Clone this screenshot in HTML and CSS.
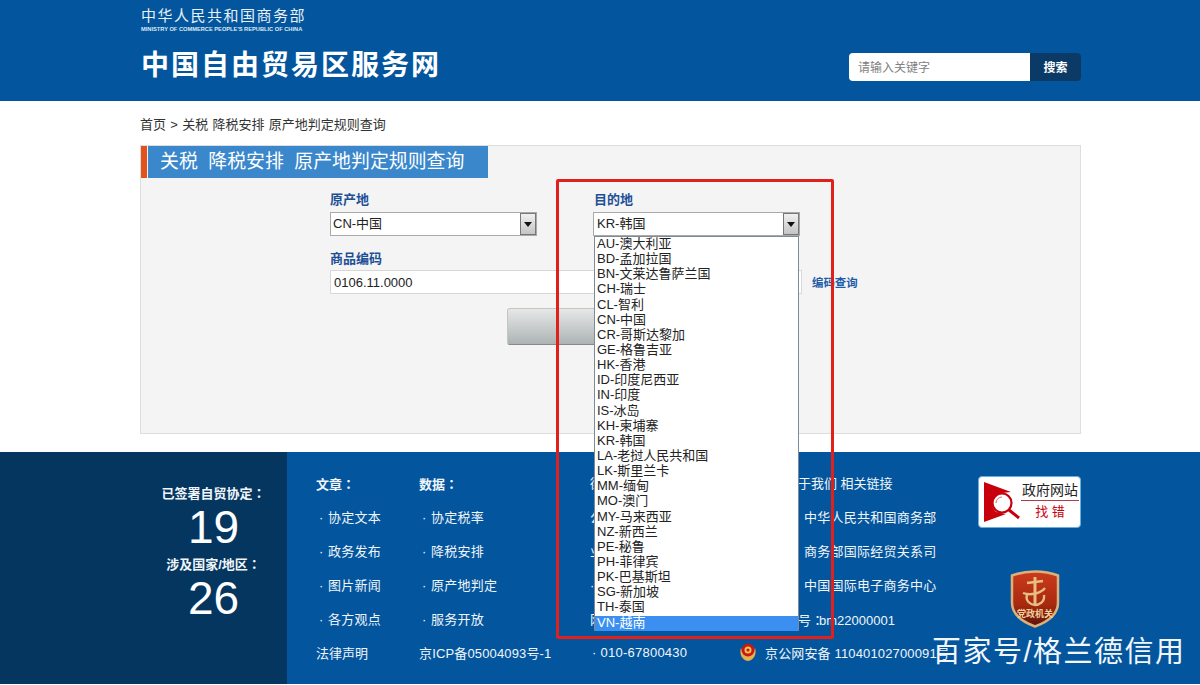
FILE: index.html
```html
<!DOCTYPE html>
<html lang="zh-CN">
<head>
<meta charset="utf-8">
<title>中国自由贸易区服务网</title>
<link rel="stylesheet" href="styles.css">
</head>
<body>
<header class="site-header">
  <div class="wrap header-inner">
    <div class="brand">
      <div class="ministry">中华人民共和国商务部</div>
      <div class="ministry-en">MINISTRY OF COMMERCE PEOPLE'S REPUBLIC OF CHINA</div>
      <div class="site-name">中国自由贸易区服务网</div>
    </div>
    <div class="search">
      <div class="search-input">请输入关键字</div>
      <div class="search-btn">搜索</div>
    </div>
  </div>
</header>

<main class="wrap">
  <div class="crumb">首页 &gt; 关税 降税安排 原产地判定规则查询</div>
  <section class="panel">
    <h1 class="panel-title"><span class="panel-title-text">关税  降税安排  原产地判定规则查询</span></h1>
    <div class="form">
      <div class="form-row">
        <div class="field">
          <div class="label">原产地</div>
          <div class="select"><span>CN-中国</span><span class="arrow"><svg width="8" height="5" viewBox="0 0 8 5"><path d="M0 0h8L4 5z" fill="#111"/></svg></span></div>
        </div>
        <div class="field">
          <div class="label">目的地</div>
          <div class="select"><span>KR-韩国</span><span class="arrow"><svg width="8" height="5" viewBox="0 0 8 5"><path d="M0 0h8L4 5z" fill="#111"/></svg></span></div>
        </div>
      </div>
      <div class="label label-code">商品编码</div>
      <div class="code-row">
        <div class="code-input">0106.11.0000</div>
        <div class="code-link">编码查询</div>
      </div>
      <div class="submit-row"><div class="submit"></div></div>
    </div>
  </section>
</main>

<footer class="site-footer">
  <div class="stats">
    <div class="stat-label">已签署自贸协定<span class="colon" lang="zh-TW">：</span></div>
    <div class="stat-num">19</div>
    <div class="stat-label stat-label-2">涉及国家/地区<span class="colon" lang="zh-TW">：</span></div>
    <div class="stat-num">26</div>
  </div>
  <div class="foot-main">
    <div class="foot-cols">
      <ul class="col col-1">
        <li class="col-head">文章<span class="colon" lang="zh-TW">：</span></li>
        <li>· <span>协定文本</span></li>
        <li>· <span>政务发布</span></li>
        <li>· <span>图片新闻</span></li>
        <li>· <span>各方观点</span></li>
      </ul>
      <ul class="col col-2">
        <li class="col-head">数据<span class="colon" lang="zh-TW">：</span></li>
        <li>· <span>协定税率</span></li>
        <li>· <span>降税安排</span></li>
        <li>· <span>原产地判定</span></li>
        <li>· <span>服务开放</span></li>
      </ul>
      <ul class="col col-3">
        <li class="col-plain">街</li>
        <li class="col-plain">公</li>
        <li class="col-plain">业</li>
        <li class="col-plain">·</li>
        <li class="col-plain">网</li>
      </ul>
      <ul class="col col-4">
        <li class="col-head-plain">关于我们 相关链接</li>
        <li>· <span>中华人民共和国商务部</span></li>
        <li>· <span>商务部国际经贸关系司</span></li>
        <li>· <span>中国国际电子商务中心</span></li>
        <li class="col-code">号<span class="colon colon-tight" lang="zh-TW">：</span>bm22000001</li>
      </ul>
      <div class="badges">
        <div class="find-error">
          <svg class="find-icon" width="37" height="41" viewBox="0 0 37 41">
            <path d="M0 0l27 10-9 1A11 11 0 0 0 12 30l10 2L0 40z" fill="#c8000b"/>
            <circle cx="18" cy="21" r="9.500" fill="#fff" stroke="#c8000b" stroke-width="2.200"/>
            <path d="M25 28l10 8" stroke="#c8000b" stroke-width="3"/>
            <path d="M12 21a6 6 0 0 1 6-6" fill="none" stroke="#d66" stroke-width="1"/>
          </svg>
          <div class="find-text">
            <div class="find-top">政府网站</div>
            <div class="find-bottom">找 错</div>
          </div>
        </div>
        <div class="party">
          <svg class="shield" width="50" height="58" viewBox="0 0 50 58">
            <defs>
              <linearGradient id="sg" x1="0" y1="0" x2="0" y2="1">
                <stop offset="0" stop-color="#cc3a1c"/>
                <stop offset="0.6" stop-color="#a8290f"/>
                <stop offset="1" stop-color="#5a120c"/>
              </linearGradient>
            </defs>
            <path d="M25 1.500c8 0 15 1 23 4v27c0 13-12 20-23 24C14 52.500 2 45.500 2 32.500v-27c8-3 15-4 23-4z" fill="url(#sg)" stroke="#dcb078" stroke-width="2.500"/>
            <path d="M25 7v28" fill="none" stroke="#e6bd83" stroke-width="3"/>
            <path d="M17 13l16-2M13 23c8 3 18 0 22-5M17 25c-2 6 4 10 8 10s10-3 9-10" fill="none" stroke="#e6bd83" stroke-width="2.400"/>
          </svg>
          <span class="party-text">党政机关</span>
        </div>
      </div>
    </div>
    <div class="foot-bottom">
      <span class="fb-legal">法律声明</span>
      <span class="fb-icp">京ICP备05004093号-1</span>
      <span class="fb-tel">· 010-67800430</span>
      <svg class="police" width="18" height="19" viewBox="0 0 18 19">
        <path d="M2 5C0 11 3 17 9 18c6-1 9-7 7-13l-2 4-5 4-5-4z" fill="#e9b04a"/>
        <circle cx="9" cy="7" r="6.500" fill="#c8161d"/>
        <circle cx="9" cy="7" r="3.500" fill="#f2c744"/>
        <circle cx="9" cy="7" r="1.600" fill="#c8161d"/>
      </svg>
      <span class="fb-police">京公网安备 11040102700091号</span>
    </div>
  </div>
</footer>

<div class="red-box"></div>
<ul class="dropdown">
  <li>AU-澳大利亚</li>
  <li>BD-孟加拉国</li>
  <li>BN-文莱达鲁萨兰国</li>
  <li>CH-瑞士</li>
  <li>CL-智利</li>
  <li>CN-中国</li>
  <li>CR-哥斯达黎加</li>
  <li>GE-格鲁吉亚</li>
  <li>HK-香港</li>
  <li>ID-印度尼西亚</li>
  <li>IN-印度</li>
  <li>IS-冰岛</li>
  <li>KH-柬埔寨</li>
  <li>KR-韩国</li>
  <li>LA-老挝人民共和国</li>
  <li>LK-斯里兰卡</li>
  <li>MM-缅甸</li>
  <li>MO-澳门</li>
  <li>MY-马来西亚</li>
  <li>NZ-新西兰</li>
  <li>PE-秘鲁</li>
  <li>PH-菲律宾</li>
  <li>PK-巴基斯坦</li>
  <li>SG-新加坡</li>
  <li>TH-泰国</li>
  <li class="is-active">VN-越南</li>
</ul>
<div class="watermark">百家号/格兰德信用</div>
</body>
</html>
```

FILE: styles.css
```css
* { box-sizing: border-box; }
html, body { margin: 0; padding: 0; }
body {
  position: relative;
  height: 685px;
  overflow: hidden;
  background: #fff;
  font-family: "Liberation Sans", "Noto Sans CJK SC", sans-serif;
  font-size: 13px;
  color: #222;
}
ul { list-style: none; margin: 0; padding: 0; }
.wrap { width: 941px; margin-left: 140px; }
.colon { font-family: "Noto Sans CJK TC", sans-serif; }

/* header */
.site-header { height: 101px; background: #03569e; color: #fff; }
.header-inner { display: flex; justify-content: space-between; }
.brand { padding: 8px 0 0 1px; }
.ministry { font-size: 15px; line-height: 16px; letter-spacing: 1.5px; color: #e8f0f8; white-space: nowrap; }
.ministry-en { font-size: 5.7px; line-height: 8px; margin-top: 1px; font-weight: bold; color: #dfe9f3; white-space: nowrap; }
.site-name { font-size: 28px; line-height: 34px; margin-top: 16px; font-weight: bold; letter-spacing: 2px; white-space: nowrap; }
.search { display: flex; height: 28px; margin-top: 53px; }
.search-input {
  width: 181px;
  padding-left: 9px;
  background: #fff;
  border-radius: 4px 0 0 4px;
  color: #808080;
  font-size: 12px;
  line-height: 30px;
}
.search-btn {
  width: 51px;
  background: #0b3a66;
  border-radius: 0 4px 4px 0;
  color: #fff;
  font-size: 12px;
  font-weight: bold;
  line-height: 30px;
  text-align: center;
}

/* main */
.crumb { padding-top: 16px; height: 44px; line-height: 16px; color: #333; word-spacing: 0.7px; }
.panel {
  height: 289px;
  background: #f4f4f4;
  border: 1px solid #dedede;
}
.panel-title { margin: 0; height: 32px; width: 347px; border-left: 6px solid #e4521b; font-weight: normal; }
.panel-title-text {
  display: block;
  height: 32px;
  margin-left: 1px;
  padding-left: 12px;
  background: #3a87cc;
  color: #fff;
  font-size: 18.9px;
  line-height: 32px;
  white-space: pre;
}
.form { padding: 14px 0 0 189px; }
.form-row { display: flex; gap: 56px; }
.field { width: 207px; }
.field + .field .label { padding-left: 1px; }
.field + .field .select { padding-left: 3px; }
.label { font-weight: bold; color: #1d4f97; line-height: 16px; }
.select {
  display: flex;
  justify-content: space-between;
  width: 207px;
  height: 24px;
  margin-top: 4px;
  background: #fff;
  border: 1px solid #a9a9a9;
  line-height: 22px;
  padding-left: 2px;
  color: #222;
}
.arrow {
  display: flex;
  align-items: center;
  justify-content: center;
  width: 16px;
  background: linear-gradient(#f0f0f0, #c4c4c4);
  border: 1px solid #777;
}
.label-code { margin-top: 15px; }
.code-row { display: flex; align-items: center; margin-top: 3px; }
.code-input {
  width: 472px;
  height: 24px;
  padding-left: 3px;
  background: #fff;
  border: 1px solid #d8d8d8;
  line-height: 24px;
  color: #222;
}
.code-link { margin-left: 10px; font-weight: bold; font-size: 11.4px; color: #1d5aa8; white-space: nowrap; }
.submit-row { margin: 14px 0 0 177px; }
.submit {
  width: 206px;
  height: 37px;
  border-radius: 3px;
  border: 1px solid #c4c6c6;
  border-bottom-color: #888;
  background: linear-gradient(#e6e8e8, #adb3b3);
}

/* footer */
.site-footer {
  display: flex;
  height: 232px;
  margin-top: 18px;
  background: #03569e;
  color: #f0f5fa;
}
.stats { width: 287px; padding: 33px 0 0 140px; background: #05365f; text-align: center; }
.stat-label { font-weight: bold; line-height: 16px; color: #f0f5fa; white-space: nowrap; }
.stat-label-2 { margin-top: 5px; }
.stat-num { font-size: 46px; line-height: 48px; margin-top: 1px; color: #fff; }
.foot-main { flex: 1; padding-left: 29px; }
.foot-cols { display: flex; height: 184px; padding-top: 15px; }
.col li { height: 34px; line-height: 33px; white-space: nowrap; }
.col span { margin-left: 1px; letter-spacing: 0.25px; }
.col .colon { margin-left: 0; letter-spacing: 0; }
.col-1 { width: 103px; }
.col-2 { width: 171px; }
.col-3 { width: 195px; }
.col-4 { width: 155px; }
.col-1 li:not(.col-head), .col-2 li:not(.col-head) { padding-left: 3px; }
.col-4 li:not(.col-head-plain):not(.col-code) { padding-left: 10px; }
.col-head { font-weight: bold; }
.col-code { margin-left: 13px; }
.col .colon-tight { margin-right: -5px; }
.badges { display: flex; flex-direction: column; align-items: flex-end; width: 144px; margin-left: -3px; padding-top: 9px; }
.find-error {
  display: flex;
  align-items: center;
  width: 103px;
  height: 52px;
  padding-left: 5px;
  background: #fff;
  border: 1px solid #6aaee0;
  border-radius: 4px;
}
.find-text { width: 58px; text-align: center; }
.find-top { font-size: 14px; line-height: 19px; color: #222; border-bottom: 1px solid #b03a4a; white-space: nowrap; }
.find-bottom { font-size: 13px; line-height: 22px; color: #c8000b; }
.party { position: relative; width: 50px; height: 58px; margin: 42px 21px 0 0; }
.shield { display: block; }
.party-text {
  position: absolute;
  left: 0;
  right: 0;
  top: 39px;
  text-align: center;
  font-size: 9px;
  font-weight: bold;
  line-height: 11px;
  color: #f0cf9e;
  white-space: nowrap;
}
.foot-bottom { display: flex; align-items: center; height: 33px; white-space: nowrap; }
.fb-legal { width: 103px; }
.fb-icp { width: 173px; letter-spacing: 0.15px; }
.fb-tel { width: 147px; letter-spacing: 0.25px; }
.fb-police { letter-spacing: 0.15px; }
.police { margin-right: 8px; }

/* overlays */
.dropdown {
  position: absolute;
  left: 594px;
  top: 236px;
  width: 205px;
  height: 395px;
  background: #fff;
  border: 1px solid #7f8a94;
  border-bottom: 2px solid #6d7b88;
}
.dropdown li { height: 15.15px; line-height: 14px; padding-left: 2px; color: #222; white-space: nowrap; }
.dropdown .is-active { background: #3a8ff0; color: #fff; }
.red-box {
  position: absolute;
  left: 556px;
  top: 179px;
  width: 278px;
  height: 460px;
  border: 3px solid #e1201c;
  border-radius: 2px;
}
.watermark {
  position: absolute;
  left: 932px;
  top: 633px;
  font-size: 29px;
  line-height: 38px;
  letter-spacing: 1.5px;
  color: #f2f6fa;
  white-space: nowrap;
}
```
